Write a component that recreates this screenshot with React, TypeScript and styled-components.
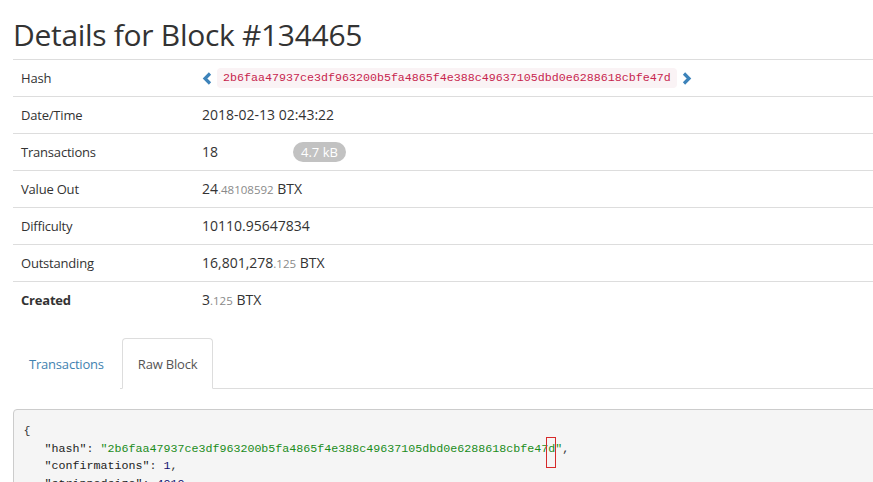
import React from 'react';
import styled, { createGlobalStyle } from 'styled-components';

const GlobalStyle = createGlobalStyle`
  html, body {
    margin: 0;
    padding: 0;
    background: #fff;
    overflow: hidden;
  }
  body {
    font-family: 'Open Sans', 'Liberation Sans', sans-serif;
    font-size: 13px;
    line-height: 20px;
    color: #333;
  }
`;

const Page = styled.div`
  width: 900px;
  padding: 0 0 0 13px;
`;

const Title = styled.h1`
  margin: 0;
  padding-top: 17px;
  height: 59px;
  box-sizing: border-box;
  font-size: 30px;
  line-height: 36px;
  font-weight: 400;
  color: #333;
  letter-spacing: -0.3px;
`;

const Table = styled.div`
  display: flex;
  flex-direction: column;
`;

const Row = styled.div`
  display: grid;
  grid-template-columns: 181px 1fr;
  height: 37px;
  box-sizing: border-box;
  border-top: 1px solid #ddd;
`;

const Label = styled.div<{ $bold?: boolean }>`
  padding: 8px;
  letter-spacing: -0.2px;
  font-weight: ${(p) => (p.$bold ? 700 : 400)};
`;

const Value = styled.div`
  padding: 8px;
  display: flex;
  align-items: center;
  font-size: 14px;
`;

const Chevron = styled.svg`
  width: 10px;
  height: 13px;
  flex: none;
`;

const HashCode = styled.code`
  margin: 0 5px 0 5px;
  padding: 1px 6px;
  font-family: 'Liberation Mono', monospace;
  font-size: 11.67px;
  line-height: 18px;
  color: #c7254e;
  background: #faf3f5;
  border-radius: 4px;
`;

const Count = styled.span`
  width: 91px;
`;

const Badge = styled.span`
  display: inline-block;
  padding: 0 8px;
  height: 20px;
  line-height: 20px;
  font-size: 13px;
  color: #fff;
  background: #c2c2c2;
  border-radius: 10px;
`;

const Small = styled.span`
  font-size: 11.5px;
  line-height: 1;
  color: #8a8a8a;
`;

const Tabs = styled.div`
  display: flex;
  margin-top: 20px;
  border-bottom: 1px solid #ddd;
`;

const Tab = styled.div<{ $active?: boolean }>`
  margin-right: 2px;
  margin-bottom: -1px;
  padding: 15px 15px 14px;
  letter-spacing: -0.2px;
  border: 1px solid ${(p) => (p.$active ? '#ddd' : 'transparent')};
  border-bottom-color: ${(p) => (p.$active ? '#fff' : 'transparent')};
  border-radius: 4px 4px 0 0;
  background: #fff;
  color: ${(p) => (p.$active ? '#555' : '#3f82b0')};
`;

const Pre = styled.pre`
  margin: 20px 0 0;
  padding: 13px 9.5px;
  font-family: 'Liberation Mono', monospace;
  font-size: 11.67px;
  line-height: 17.6px;
  color: #333;
  background: #f5f5f5;
  border: 1px solid #ccc;
  border-radius: 4px;
`;

const Key = styled.span`
  color: #222;
`;

const Str = styled.span`
  color: #1a8c1a;
`;

const Num = styled.span`
  color: #10106e;
`;

const Marked = styled.span`
  position: relative;
  &::after {
    content: '';
    position: absolute;
    left: -2px;
    top: -5px;
    width: 8px;
    height: 29px;
    border: 1px solid #d62a2a;
  }
`;

function ChevronIcon({ dir }: { dir: 'left' | 'right' }) {
  const pts = dir === 'left' ? '8,1.5 3,6.5 8,11.5' : '2,1.5 7,6.5 2,11.5';
  return (
    <Chevron viewBox="0 0 10 13">
      <polyline points={pts} fill="none" stroke="#3d83ba" strokeWidth="3.2" />
    </Chevron>
  );
}

const hash = '2b6faa47937ce3df963200b5fa4865f4e388c49637105dbd0e6288618cbfe47d';

export default function App() {
  return (
    <Page>
      <GlobalStyle />
      <Title>Details for Block #134465</Title>
      <Table>
        <Row>
          <Label>Hash</Label>
          <Value>
            <ChevronIcon dir="left" />
            <HashCode>{hash}</HashCode>
            <ChevronIcon dir="right" />
          </Value>
        </Row>
        <Row>
          <Label>Date/Time</Label>
          <Value>2018-02-13 02:43:22</Value>
        </Row>
        <Row>
          <Label>Transactions</Label>
          <Value>
            <Count>18</Count>
            <Badge>4.7 kB</Badge>
          </Value>
        </Row>
        <Row>
          <Label>Value Out</Label>
          <Value>
            <span>
              24<Small>.48108592</Small> BTX
            </span>
          </Value>
        </Row>
        <Row>
          <Label>Difficulty</Label>
          <Value>10110.95647834</Value>
        </Row>
        <Row>
          <Label>Outstanding</Label>
          <Value>
            <span>
              16,801,278<Small>.125</Small> BTX
            </span>
          </Value>
        </Row>
        <Row>
          <Label $bold>Created</Label>
          <Value>
            <span>
              3<Small>.125</Small> BTX
            </span>
          </Value>
        </Row>
      </Table>
      <Tabs>
        <Tab>Transactions</Tab>
        <Tab $active>Raw Block</Tab>
      </Tabs>
      <Pre>
        {'{\n   '}
        <Key>"hash"</Key>: <Str>"{hash.slice(0, -1)}<Marked>d</Marked>"</Str>
        {',\n   '}
        <Key>"confirmations"</Key>: <Num>1</Num>
        {',\n   '}
        <Key>"strippedsize"</Key>: <Num>4010</Num>
        {',\n'}
      </Pre>
    </Page>
  );
}
